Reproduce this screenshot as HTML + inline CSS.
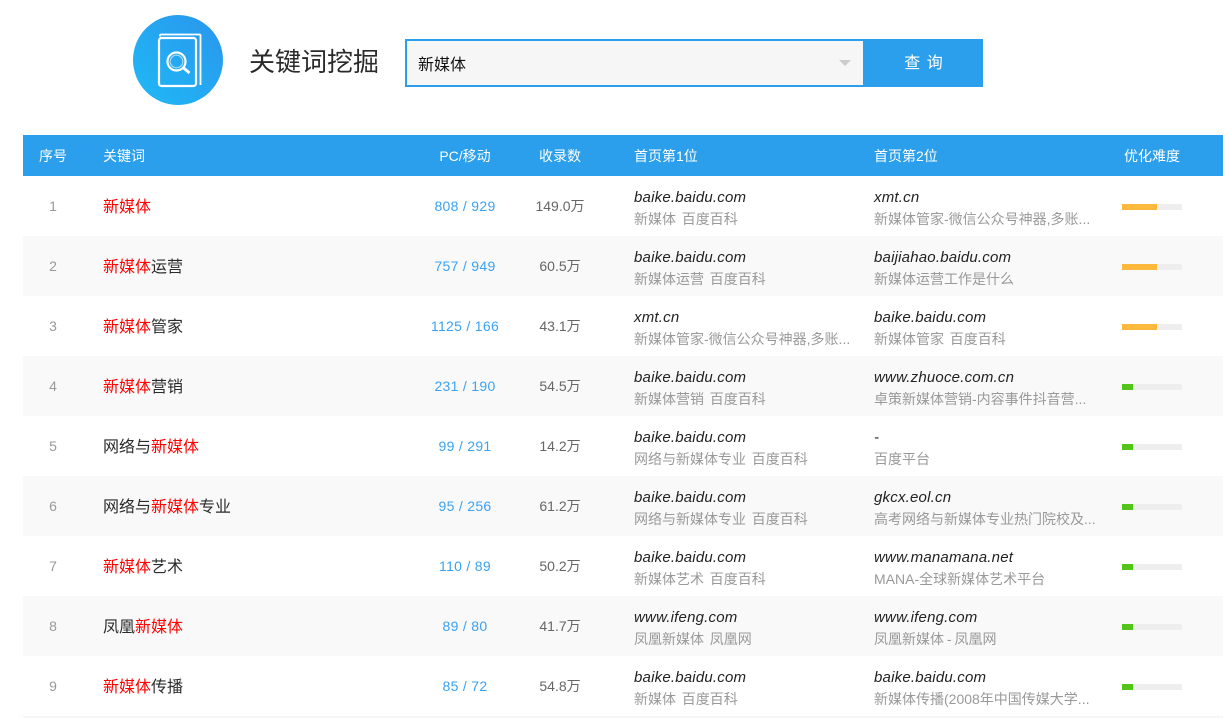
<!DOCTYPE html>
<html lang="zh">
<head>
<meta charset="utf-8">
<style>
html,body{margin:0;padding:0;background:#fff;width:1231px;height:718px;overflow:hidden}
body{position:relative;font-family:"Liberation Sans","Noto Sans CJK SC",sans-serif;font-size:14px;color:#333}
.a{position:absolute;white-space:nowrap}
.title{left:249px;top:44px;font-size:26px;line-height:36px;color:#2a2a2a}
.box{left:405px;top:39px;width:456px;height:44px;border:2px solid #2b9fec;border-right:0;background:#f6f6f6}
.btn{left:864px;top:39px;width:120px;height:48px;background:#2b9fec;color:#fff;text-align:center;font-size:16px;line-height:49px;letter-spacing:1px}
.hd{left:23px;top:135px;width:1200px;height:41px;background:#2b9fec}
.h{top:135px;line-height:43px;color:#fff;font-size:14px}
.c{text-align:center}
.row{position:absolute;left:23px;width:1200px;height:60px}
.row.g{background:#f9f9f9}
.row>div{position:absolute;white-space:nowrap}
.n{left:0;width:60px;text-align:center;top:1px;line-height:59px;color:#999}
.k{left:80px;top:2px;line-height:60px;font-size:16px;color:#2a2a2a}
.k b{font-weight:normal;color:#f00}
.p{left:382px;width:120px;text-align:center;top:1px;line-height:59px;color:#3ba2f2;letter-spacing:.3px}
.s{left:477px;width:120px;text-align:center;top:1px;line-height:59px;color:#666}
.u{top:12px;line-height:20px;font-style:italic;color:#222;font-size:15px;letter-spacing:.2px}
.t{top:33px;line-height:20px;color:#999;font-size:14px;word-spacing:-1px}
.u1,.t1{left:611px}
.u2,.t2{left:851px}
.bar{left:1099px;top:28px;width:60px;height:6px;background:#eee}
.bar i{display:block;height:6px}
.y i{width:35px;background:#fcb93c}
.v i{width:11px;background:#52c41a}
</style>
</head>
<body>
<svg class="a" style="left:133px;top:15px" width="90" height="90" viewBox="0 0 90 90">
<defs><linearGradient id="gr" x1="0" y1="1" x2="1" y2="0"><stop offset="0" stop-color="#1fbaf6"/><stop offset="1" stop-color="#2a95ec"/></linearGradient></defs>
<circle cx="45" cy="45" r="45" fill="url(#gr)"/>
<g fill="none" stroke="#fff">
<rect x="26" y="23" width="37" height="48" rx="2.500" stroke-width="2.200"/>
<path d="M27 21.500V20.500Q27 19.500 28 19.500H66.500Q67.500 19.500 67.500 20.500V70" stroke-width="1.800"/>
<circle cx="43.500" cy="46.500" r="9" stroke-width="2.200"/>
<circle cx="43.500" cy="46.500" r="6.300" stroke-width="1.200" stroke-opacity=".6"/>
<path d="M50 52.500L56.500 58" stroke-width="2.800"/>
</g>
</svg>
<div class="a title">关键词挖掘</div>
<div class="a box"></div>
<div class="a" style="left:418px;top:55px;line-height:22px;font-size:16px;color:#111">新媒体</div>
<div class="a" style="left:839px;top:60px;width:0;height:0;border-left:6px solid transparent;border-right:6px solid transparent;border-top:6px solid #ccc"></div>
<div class="a" style="left:863px;top:39px;width:120px;height:48px;background:#2b9fec"></div>
<div class="a" style="left:864px;top:39px;width:120px;height:48px;color:#fff;text-align:center;font-size:16px;line-height:49px;letter-spacing:1px">查&nbsp;询</div>

<div class="a hd"></div>
<div class="a h c" style="left:23px;width:60px">序号</div>
<div class="a h" style="left:103px">关键词</div>
<div class="a h c" style="left:405px;width:120px">PC/移动</div>
<div class="a h c" style="left:500px;width:120px">收录数</div>
<div class="a h" style="left:634px">首页第1位</div>
<div class="a h" style="left:874px">首页第2位</div>
<div class="a h" style="left:1124px">优化难度</div>

<div class="row" style="top:176px"><div class="n">1</div><div class="k"><b>新媒体</b></div><div class="p">808 / 929</div><div class="s">149.0万</div><div class="u u1">baike.baidu.com</div><div class="t t1">新媒体&nbsp; 百度百科</div><div class="u u2">xmt.cn</div><div class="t t2">新媒体管家-微信公众号神器,多账...</div><div class="bar y"><i></i></div></div>
<div class="row g" style="top:236px"><div class="n">2</div><div class="k"><b>新媒体</b>运营</div><div class="p">757 / 949</div><div class="s">60.5万</div><div class="u u1">baike.baidu.com</div><div class="t t1">新媒体运营&nbsp; 百度百科</div><div class="u u2">baijiahao.baidu.com</div><div class="t t2">新媒体运营工作是什么</div><div class="bar y"><i></i></div></div>
<div class="row" style="top:296px"><div class="n">3</div><div class="k"><b>新媒体</b>管家</div><div class="p">1125 / 166</div><div class="s">43.1万</div><div class="u u1">xmt.cn</div><div class="t t1">新媒体管家-微信公众号神器,多账...</div><div class="u u2">baike.baidu.com</div><div class="t t2">新媒体管家&nbsp; 百度百科</div><div class="bar y"><i></i></div></div>
<div class="row g" style="top:356px"><div class="n">4</div><div class="k"><b>新媒体</b>营销</div><div class="p">231 / 190</div><div class="s">54.5万</div><div class="u u1">baike.baidu.com</div><div class="t t1">新媒体营销&nbsp; 百度百科</div><div class="u u2">www.zhuoce.com.cn</div><div class="t t2">卓策新媒体营销-内容事件抖音营...</div><div class="bar v"><i></i></div></div>
<div class="row" style="top:416px"><div class="n">5</div><div class="k">网络与<b>新媒体</b></div><div class="p">99 / 291</div><div class="s">14.2万</div><div class="u u1">baike.baidu.com</div><div class="t t1">网络与新媒体专业&nbsp; 百度百科</div><div class="u u2">-</div><div class="t t2">百度平台</div><div class="bar v"><i></i></div></div>
<div class="row g" style="top:476px"><div class="n">6</div><div class="k">网络与<b>新媒体</b>专业</div><div class="p">95 / 256</div><div class="s">61.2万</div><div class="u u1">baike.baidu.com</div><div class="t t1">网络与新媒体专业&nbsp; 百度百科</div><div class="u u2">gkcx.eol.cn</div><div class="t t2">高考网络与新媒体专业热门院校及...</div><div class="bar v"><i></i></div></div>
<div class="row" style="top:536px"><div class="n">7</div><div class="k"><b>新媒体</b>艺术</div><div class="p">110 / 89</div><div class="s">50.2万</div><div class="u u1">baike.baidu.com</div><div class="t t1">新媒体艺术&nbsp; 百度百科</div><div class="u u2">www.manamana.net</div><div class="t t2">MANA-全球新媒体艺术平台</div><div class="bar v"><i></i></div></div>
<div class="row g" style="top:596px"><div class="n">8</div><div class="k">凤凰<b>新媒体</b></div><div class="p">89 / 80</div><div class="s">41.7万</div><div class="u u1">www.ifeng.com</div><div class="t t1">凤凰新媒体&nbsp; 凤凰网</div><div class="u u2">www.ifeng.com</div><div class="t t2">凤凰新媒体 - 凤凰网</div><div class="bar v"><i></i></div></div>
<div class="row" style="top:656px"><div class="n">9</div><div class="k"><b>新媒体</b>传播</div><div class="p">85 / 72</div><div class="s">54.8万</div><div class="u u1">baike.baidu.com</div><div class="t t1">新媒体&nbsp; 百度百科</div><div class="u u2">baike.baidu.com</div><div class="t t2">新媒体传播(2008年中国传媒大学...</div><div class="bar v"><i></i></div></div>
<div class="a" style="left:23px;top:716px;width:1200px;height:2px;background:#f6f6f6"></div>
</body>
</html>
